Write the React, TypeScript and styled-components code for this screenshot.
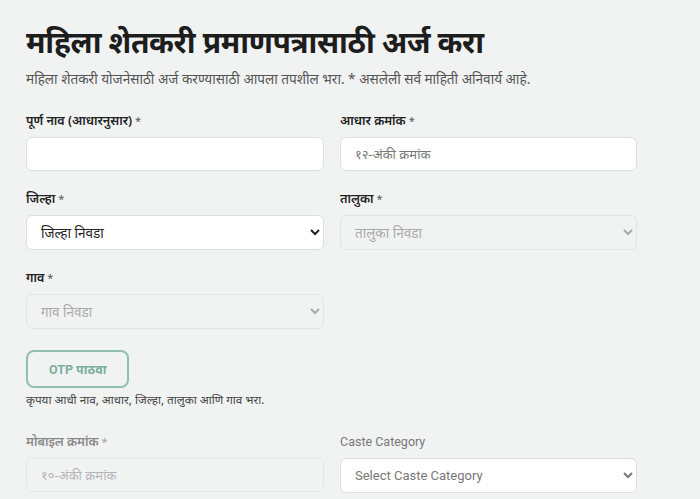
import React from "react";
import styled, { createGlobalStyle } from "styled-components";

const Global = createGlobalStyle`
  html, body { margin: 0; padding: 0; background: #f1f3f3; }
  body { font-family: "Noto Sans", "Roboto", sans-serif; color: #222; }
  * { box-sizing: border-box; }
`;

const Page = styled.div`
  padding: 20px 26px 0 26px;
  width: 663px;
`;

const Title = styled.h1`
  margin: 0;
  font-size: 30px;
  font-weight: 700;
  line-height: 44px;
  color: #1d1d1d;
  letter-spacing: -0.4px;
`;

const Subtitle = styled.p`
  margin: 5px 0 0 0;
  font-size: 13.6px;
  line-height: 20px;
  color: #555;
`;

const Grid = styled.div`
  margin-top: 23px;
  display: grid;
  grid-template-columns: 298px 297px;
  column-gap: 16px;
  row-gap: 19px;
`;

const Field = styled.div<{ $faded?: boolean }>`
  display: flex;
  flex-direction: column;
  gap: 7px;
  opacity: ${(p) => (p.$faded ? 0.5 : 1)};
`;

const Label = styled.label<{ $plain?: boolean }>`
  font-size: 12.5px;
  line-height: 18px;
  font-weight: ${(p) => (p.$plain ? 400 : 600)};
  color: ${(p) => (p.$plain ? "#777" : "#222")};
  font-family: ${(p) => (p.$plain ? '"Roboto", sans-serif' : 'inherit')};
`;

const Star = styled.span`
  font-weight: 400;
  color: #555;
  margin-left: 3px;
  font-size: 11px;
`;

const Input = styled.input`
  height: 34px;
  width: 100%;
  border: 1px solid #dcdfdf;
  border-radius: 6px;
  background: #fff;
  padding: 0 14px;
  font-size: 13px;
  font-family: inherit;
  color: #333;
  &::placeholder { color: #777; }
  &:disabled { background: #f4f5f5; }
`;

const Select = styled.select`
  height: 35px;
  width: 100%;
  border: 1px solid #dcdfdf;
  border-radius: 6px;
  background: #fff;
  padding: 0 10px;
  font-size: 13.5px;
  font-family: inherit;
  color: #222;
  &:disabled { background: #f2f3f3; color: #8a8a8a; }
`;

const PlainSelect = styled(Select)`
  font-family: "Roboto", sans-serif;
  color: #777;
  font-size: 13px;
`;

const OtpBlock = styled.div`
  grid-column: 1 / span 2;
  display: flex;
  flex-direction: column;
  align-items: flex-start;
  margin-top: 2px;
  margin-bottom: 7px;
`;

const OtpButton = styled.button`
  height: 38px;
  padding: 0 21px;
  border: 2px solid #8fc0b2;
  border-radius: 8px;
  background: transparent;
  color: #7aae9e;
  font-weight: 700;
  font-size: 12.5px;
  font-family: "Roboto", "Noto Sans", sans-serif;
`;

const Hint = styled.p`
  margin: 3px 0 0 0;
  font-size: 11.7px;
  line-height: 16px;
  color: #444;
`;

export default function App() {
  return (
    <>
      <Global />
      <Page>
        <Title>महिला शेतकरी प्रमाणपत्रासाठी अर्ज करा</Title>
        <Subtitle>
          महिला शेतकरी योजनेसाठी अर्ज करण्यासाठी आपला तपशील भरा. * असलेली सर्व माहिती अनिवार्य आहे.
        </Subtitle>
        <Grid>
          <Field>
            <Label>
              पूर्ण नाव (आधारनुसार)<Star>*</Star>
            </Label>
            <Input />
          </Field>
          <Field>
            <Label>
              आधार क्रमांक<Star>*</Star>
            </Label>
            <Input placeholder="१२-अंकी क्रमांक" />
          </Field>
          <Field>
            <Label>
              जिल्हा<Star>*</Star>
            </Label>
            <Select defaultValue="">
              <option value="">जिल्हा निवडा</option>
            </Select>
          </Field>
          <Field>
            <Label>
              तालुका<Star>*</Star>
            </Label>
            <Select disabled defaultValue="">
              <option value="">तालुका निवडा</option>
            </Select>
          </Field>
          <Field>
            <Label>
              गाव<Star>*</Star>
            </Label>
            <Select disabled defaultValue="">
              <option value="">गाव निवडा</option>
            </Select>
          </Field>
          <div />
          <OtpBlock>
            <OtpButton disabled>OTP पाठवा</OtpButton>
            <Hint>कृपया आधी नाव, आधार, जिल्हा, तालुका आणि गाव भरा.</Hint>
          </OtpBlock>
          <Field $faded>
            <Label>
              मोबाइल क्रमांक<Star>*</Star>
            </Label>
            <Input disabled placeholder="१०-अंकी क्रमांक" />
          </Field>
          <Field>
            <Label $plain>Caste Category</Label>
            <PlainSelect defaultValue="">
              <option value="">Select Caste Category</option>
            </PlainSelect>
          </Field>
        </Grid>
      </Page>
    </>
  );
}
